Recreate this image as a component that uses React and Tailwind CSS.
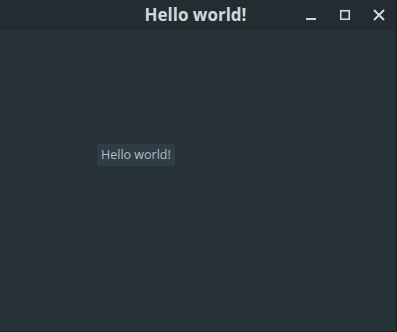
import React from "react";

const App = () => {
  return (
    <div className="w-[397px] h-[332px] flex bg-[#1b2226]">
      <div className="w-[396px] h-[331px] flex flex-col bg-[#263238] font-['Open_Sans',sans-serif]">
        {/* title bar */}
        <div className="relative h-[30px] flex items-center justify-center bg-[#222c31]">
          <span className="text-[17px] font-bold text-[#cfd8dc] leading-none pr-[5px] pb-[2px]">
            Hello world!
          </span>
          <div className="absolute right-[11px] top-0 h-[30px] flex items-center gap-[22px]">
            <svg width="12" height="12" viewBox="0 0 12 12">
              <rect x="1" y="9" width="10" height="2" fill="#cfd8dc" />
            </svg>
            <svg width="12" height="12" viewBox="0 0 12 12">
              <rect x="1.75" y="1.75" width="8.5" height="8.5" fill="none" stroke="#cfd8dc" strokeWidth="1.6" />
            </svg>
            <svg width="12" height="12" viewBox="0 0 12 12">
              <path d="M1 1L11 11M11 1L1 11" stroke="#cfd8dc" strokeWidth="2" />
            </svg>
          </div>
        </div>
        {/* content */}
        <div className="flex-1 pl-[96px] pt-[111px]">
          <button className="h-[24px] px-[4px] bg-[#2f3d44] border border-[#24303a] rounded-[2px] text-[12.5px] text-[#b0bec5] leading-none">
            Hello world!
          </button>
        </div>
      </div>
    </div>
  );
};

export default App;
